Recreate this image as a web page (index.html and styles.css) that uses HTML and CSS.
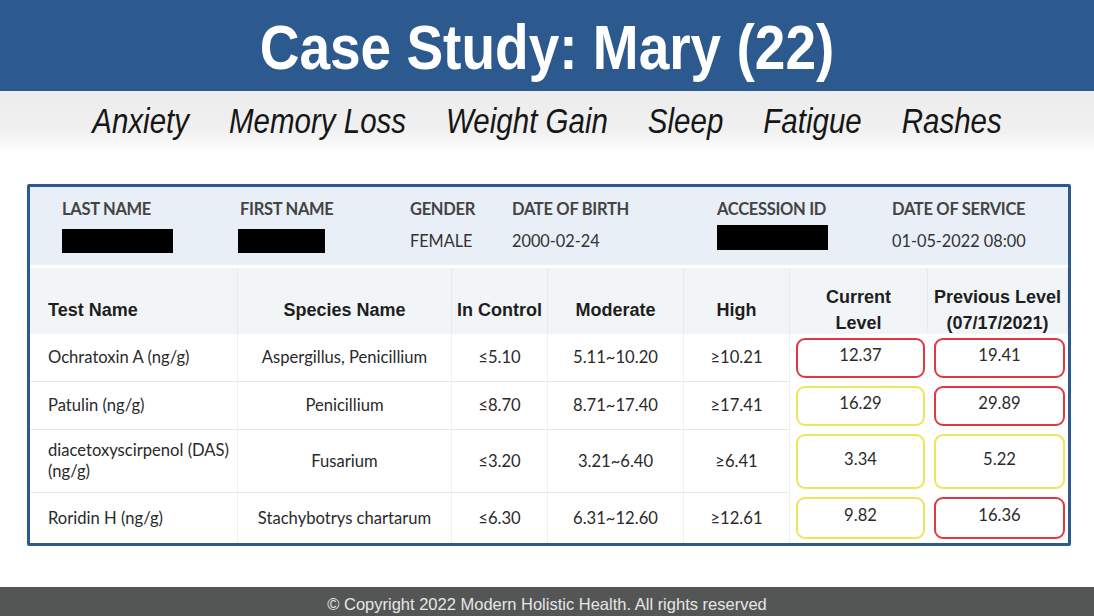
FILE: index.html
```html
<!DOCTYPE html>
<html lang="en">
<head>
<meta charset="utf-8">
<title>Case Study: Mary (22)</title>
<link rel="stylesheet" href="styles.css">
</head>
<body>
<div class="slide">
  <header class="title-bar">
    <h1 class="title">Case Study: Mary (22)</h1>
  </header>
  <div class="symptoms">
    <span>Anxiety</span>
    <span>Memory Loss</span>
    <span>Weight Gain</span>
    <span>Sleep</span>
    <span>Fatigue</span>
    <span>Rashes</span>
  </div>
  <main class="report-wrap">
    <section class="report">
      <div class="patient">
        <div class="field"><div class="label">LAST NAME</div><div class="value"><span class="redact redact-last"></span></div></div>
        <div class="field"><div class="label">FIRST NAME</div><div class="value"><span class="redact redact-first"></span></div></div>
        <div class="field"><div class="label">GENDER</div><div class="value">FEMALE</div></div>
        <div class="field"><div class="label">DATE OF BIRTH</div><div class="value">2000-02-24</div></div>
        <div class="field"><div class="label">ACCESSION ID</div><div class="value"><span class="redact redact-acc"></span></div></div>
        <div class="field"><div class="label">DATE OF SERVICE</div><div class="value">01-05-2022 08:00</div></div>
      </div>
      <div class="results">
        <div class="th th-left">Test Name</div>
        <div class="th">Species Name</div>
        <div class="th">In Control</div>
        <div class="th">Moderate</div>
        <div class="th">High</div>
        <div class="th">Current<br>Level</div>
        <div class="th">Previous Level<br>(07/17/2021)</div>

        <div class="td td-left">Ochratoxin A (ng/g)</div>
        <div class="td">Aspergillus, Penicillium</div>
        <div class="td">≤5.10</div>
        <div class="td">5.11~10.20</div>
        <div class="td">≥10.21</div>
        <div class="lv"><div class="box red">12.37</div></div>
        <div class="lv"><div class="box red">19.41</div></div>

        <div class="td td-left">Patulin (ng/g)</div>
        <div class="td">Penicillium</div>
        <div class="td">≤8.70</div>
        <div class="td">8.71~17.40</div>
        <div class="td">≥17.41</div>
        <div class="lv"><div class="box yellow">16.29</div></div>
        <div class="lv"><div class="box red">29.89</div></div>

        <div class="td td-left">diacetoxyscirpenol (DAS) (ng/g)</div>
        <div class="td">Fusarium</div>
        <div class="td">≤3.20</div>
        <div class="td">3.21~6.40</div>
        <div class="td">≥6.41</div>
        <div class="lv"><div class="box yellow">3.34</div></div>
        <div class="lv"><div class="box yellow">5.22</div></div>

        <div class="td td-left td-last">Roridin H (ng/g)</div>
        <div class="td td-last">Stachybotrys chartarum</div>
        <div class="td td-last">≤6.30</div>
        <div class="td td-last">6.31~12.60</div>
        <div class="td td-last">≥12.61</div>
        <div class="lv"><div class="box yellow">9.82</div></div>
        <div class="lv"><div class="box red">16.36</div></div>
      </div>
    </section>
  </main>
  <footer class="footer">© Copyright 2022 Modern Holistic Health. All rights reserved</footer>
</div>
</body>
</html>
```

FILE: styles.css
```css
* { box-sizing: border-box; }
html, body { margin: 0; padding: 0; background: #ffffff; }
body { width: 1094px; height: 616px; overflow: hidden; }

.slide {
  width: 1094px;
  height: 616px;
  display: flex;
  flex-direction: column;
  font-family: "Liberation Sans", Arial, sans-serif;
}

.title-bar {
  height: 91px;
  background: #2c5a8e;
  display: flex;
  align-items: center;
  justify-content: center;
}
.title {
  margin: 0;
  color: #ffffff;
  font-size: 55px;
  font-weight: bold;
  line-height: 1;
  transform: scaleY(1.15);
  padding-top: 4px;
}

.symptoms {
  height: 57px;
  background: linear-gradient(to bottom, #ececec 0%, #f1f1f1 70%, #fbfbfb 100%);
  display: flex;
  justify-content: center;
  align-items: center;
  gap: 40px;
  font-style: italic;
  font-size: 29.5px;
  color: #161616;
  padding-top: 2px;
}
.symptoms span { transform: scaleY(1.17); display: inline-block; }

.report-wrap {
  padding: 36px 23px 0 27px;
  height: 398px;
}
.report {
  width: 1044px;
  height: 362px;
  border: 3px solid #2c5a8e;
  border-radius: 2px;
  background: #ffffff;
  display: flex;
  flex-direction: column;
  gap: 3px;
}

.patient {
  height: 78px;
  background: #e9eff6;
  display: grid;
  grid-template-columns: 178px 170px 102px 205px 175px 1fr;
  padding: 12px 0 0 32px;
  font-family: Lato, "Liberation Sans", sans-serif;
  color: #333;
}
.field { display: flex; flex-direction: column; gap: 8px; }
.label {
  font-size: 16.5px;
  font-weight: bold;
  line-height: 20px;
  color: #444;
  letter-spacing: -0.3px;
}
.value {
  font-size: 16.3px;
  line-height: 24px;
  height: 24px;
  color: #333;
  padding-top: 2px;
}
.redact { display: block; background: #000; height: 24px; }
.redact-last { width: 111px; }
.redact-first { width: 87px; margin-left: -2px; }
.redact-acc { width: 111px; margin-top: -4px; height: 25px; }

.results {
  display: grid;
  grid-template-columns: 208px 214px 96px 136px 106px 138px 140px;
  grid-template-rows: 66px 48px 48px 63px 50px;
  font-family: Lato, "Liberation Sans", sans-serif;
  font-size: 16.6px;
  color: #2a2a2a;
}
.th {
  background: #f2f5f8;
  font-family: "Liberation Sans", Arial, sans-serif;
  font-weight: bold;
  font-size: 18px;
  line-height: 26px;
  color: #1e1e1e;
  display: flex;
  align-items: center;
  justify-content: center;
  text-align: center;
  padding-top: 17px;
  border-right: 1px solid #e9ecef;
}
.th-left { justify-content: flex-start; padding-left: 18px; }
.td {
  display: flex;
  align-items: center;
  justify-content: center;
  text-align: center;
  border-bottom: 1px solid #e6e8eb;
  border-right: 1px solid #eef0f2;
  line-height: 21px;
}
.td-left { justify-content: flex-start; text-align: left; padding-left: 18px; padding-right: 4px; }
.td-last { border-bottom: none; }
.lv { display: flex; padding: 4px 3px 4px 6px; }
.box {
  flex: 1;
  display: flex;
  align-items: center;
  justify-content: center;
  border: 2px solid;
  border-radius: 9px;
  padding-bottom: 6px;
}
.red { border-color: #e0383e; }
.yellow { border-color: #ede55a; }

.footer {
  margin-top: auto;
  height: 29px;
  background: #545656;
  color: #e6e6e6;
  font-size: 16.5px;
  display: flex;
  align-items: center;
  justify-content: center;
  padding-top: 6px;
}
```
